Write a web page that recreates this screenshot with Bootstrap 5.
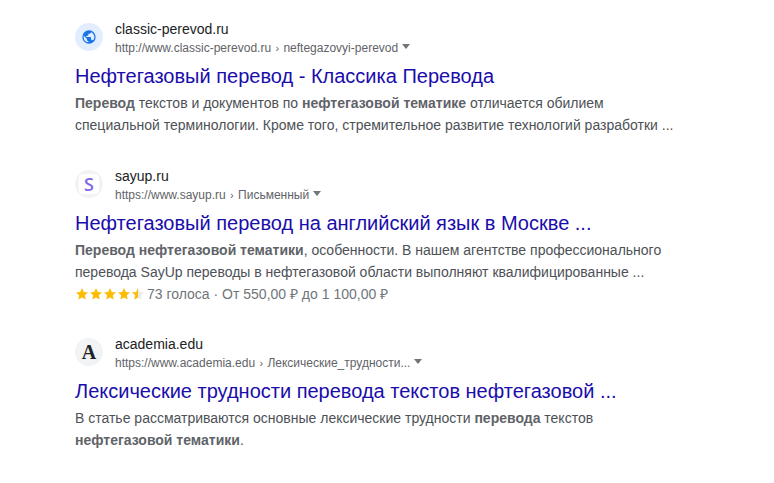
<!DOCTYPE html>
<html lang="ru">
<head>
  <meta charset="UTF-8">
  <title>Результаты поиска</title>
  <link href="https://cdn.jsdelivr.net/npm/bootstrap@5.3.3/dist/css/bootstrap.min.css" rel="stylesheet">
  <style>
    body {
      background-color: #fff;
      font-family: "Liberation Sans", Arial, sans-serif;
      color: #4d5156;
    }

    .serp-page {
      padding: 19px 0 0 75px;
      width: 680px;
    }

    .serp-item {
      margin-bottom: 30px;
    }

    .serp-item.has-rating {
      margin-bottom: 29px;
    }

    .serp-head {
      height: 38px;
    }

    .fav-wrap {
      width: 28px;
      height: 28px;
      margin-top: 4px;
      margin-right: 12px;
      background-color: #f1f3f4;
    }

    .fav-wrap.fav-blue {
      background-color: #e2eeff;
    }

    .fav-letter-s {
      font-family: "Open Sans", sans-serif;
      font-weight: 600;
      color: #7b68ee;
      font-size: 18px;
      background-color: #fff;
      width: 20px;
      height: 20px;
      border-radius: 4px;
    }

    .fav-letter-a {
      font-family: "Liberation Serif", serif;
      font-weight: 700;
      color: #202124;
      font-size: 20px;
    }

    .serp-domain {
      font-size: 14px;
      line-height: 20px;
      color: #202124;
    }

    .serp-url {
      font-size: 12px;
      line-height: 16px;
      margin-top: 1px;
      color: #5f6368;
      white-space: nowrap;
    }

    .serp-sep {
      font-size: 11px;
      margin: 0 1px;
    }

    .serp-caret {
      width: 0;
      height: 0;
      border-left: 4.5px solid transparent;
      border-right: 4.5px solid transparent;
      border-top: 5px solid #70757a;
      margin-left: 4px;
      margin-bottom: 4px;
    }

    .serp-title {
      display: block;
      font-size: 20px;
      line-height: 26px;
      margin: 6px 0 3px;
      color: #1a0dab;
      text-decoration: none;
      white-space: nowrap;
    }

    .serp-text {
      font-size: 14px;
      line-height: 22px;
      color: #4d5156;
      white-space: nowrap;
    }

    .serp-text b {
      color: #5f6368;
    }

    .serp-stars {
      width: 70px;
      height: 14px;
      margin-right: 2px;
    }

    .serp-meta {
      color: #70757a;
    }
  </style>
</head>
<body>
  <div class="serp-page">

    <div class="serp-item">
      <div class="d-flex serp-head">
        <div class="fav-wrap fav-blue rounded-circle d-flex align-items-center justify-content-center">
          <svg width="16" height="16" viewBox="0 0 24 24"><path fill="#1a73e8" d="M12 2a10 10 0 1 0 0 20 10 10 0 0 0 0-20zM4 12c0-.6.1-1.200.2-1.800L9 15v1c0 1.100.9 2 2 2v2A8 8 0 0 1 4 12zm13.900 5.400c-.3-.8-1-1.400-1.900-1.400h-1v-3c0-.6-.4-1-1-1H8v-2h2c.6 0 1-.4 1-1V7h2c1.100 0 2-.9 2-2v-.4a8 8 0 0 1 2.900 12.800z"/></svg>
        </div>
        <div>
          <div class="serp-domain">classic-perevod.ru</div>
          <div class="serp-url d-flex align-items-center">http://www.classic-perevod.ru&nbsp;<span class="serp-sep">›</span>&nbsp;neftegazovyi-perevod<span class="serp-caret"></span></div>
        </div>
      </div>
      <a class="serp-title" href="#">Нефтегазовый перевод - Классика Перевода</a>
      <div class="serp-text"><b>Перевод</b> текстов и документов по <b>нефтегазовой тематике</b> отличается обилием</div>
      <div class="serp-text">специальной терминологии. Кроме того, стремительное развитие технологий разработки ...</div>
    </div>

    <div class="serp-item has-rating">
      <div class="d-flex serp-head">
        <div class="fav-wrap rounded-circle d-flex align-items-center justify-content-center">
          <span class="fav-letter-s d-flex align-items-center justify-content-center">S</span>
        </div>
        <div>
          <div class="serp-domain">sayup.ru</div>
          <div class="serp-url d-flex align-items-center">https://www.sayup.ru&nbsp;<span class="serp-sep">›</span>&nbsp;Письменный<span class="serp-caret"></span></div>
        </div>
      </div>
      <a class="serp-title" href="#">Нефтегазовый перевод на английский язык в Москве ...</a>
      <div class="serp-text"><b>Перевод нефтегазовой тематики</b>, особенности. В нашем агентстве профессионального</div>
      <div class="serp-text">перевода SayUp переводы в нефтегазовой области выполняют квалифицированные ...</div>
      <div class="serp-text d-flex align-items-center">
        <svg class="serp-stars" viewBox="0 0 70 14">
          <defs>
            <path id="star" d="M7 1l1.800 4 4.200.4-3.200 2.900.9 4.300L7 10.400 3.300 12.600l.9-4.300L1 5.400 5.200 5z"/>
            <clipPath id="half"><rect x="56" y="0" width="7" height="14"/></clipPath>
          </defs>
          <use href="#star" fill="#fbbc04"/>
          <use href="#star" x="14" fill="#fbbc04"/>
          <use href="#star" x="28" fill="#fbbc04"/>
          <use href="#star" x="42" fill="#fbbc04"/>
          <use href="#star" x="56" fill="#e8eaed"/>
          <path clip-path="url(#half)" fill="#fbbc04" d="M63 1l1.800 4 4.200.4-3.200 2.900.9 4.300L63 10.400l-3.700 2.200.9-4.300L57 5.400 61.200 5z"/>
        </svg>
        <span class="serp-meta">73 голоса · От 550,00 ₽ до 1 100,00 ₽</span>
      </div>
    </div>

    <div class="serp-item">
      <div class="d-flex serp-head">
        <div class="fav-wrap rounded-circle d-flex align-items-center justify-content-center">
          <span class="fav-letter-a">A</span>
        </div>
        <div>
          <div class="serp-domain">academia.edu</div>
          <div class="serp-url d-flex align-items-center">https://www.academia.edu&nbsp;<span class="serp-sep">›</span>&nbsp;Лексические_трудности...<span class="serp-caret"></span></div>
        </div>
      </div>
      <a class="serp-title" href="#">Лексические трудности перевода текстов нефтегазовой ...</a>
      <div class="serp-text">В статье рассматриваются основные лексические трудности <b>перевода</b> текстов</div>
      <div class="serp-text"><b>нефтегазовой тематики</b>.</div>
    </div>

  </div>
  <script src="https://cdn.jsdelivr.net/npm/bootstrap@5.3.3/dist/js/bootstrap.bundle.min.js"></script>
</body>
</html>
